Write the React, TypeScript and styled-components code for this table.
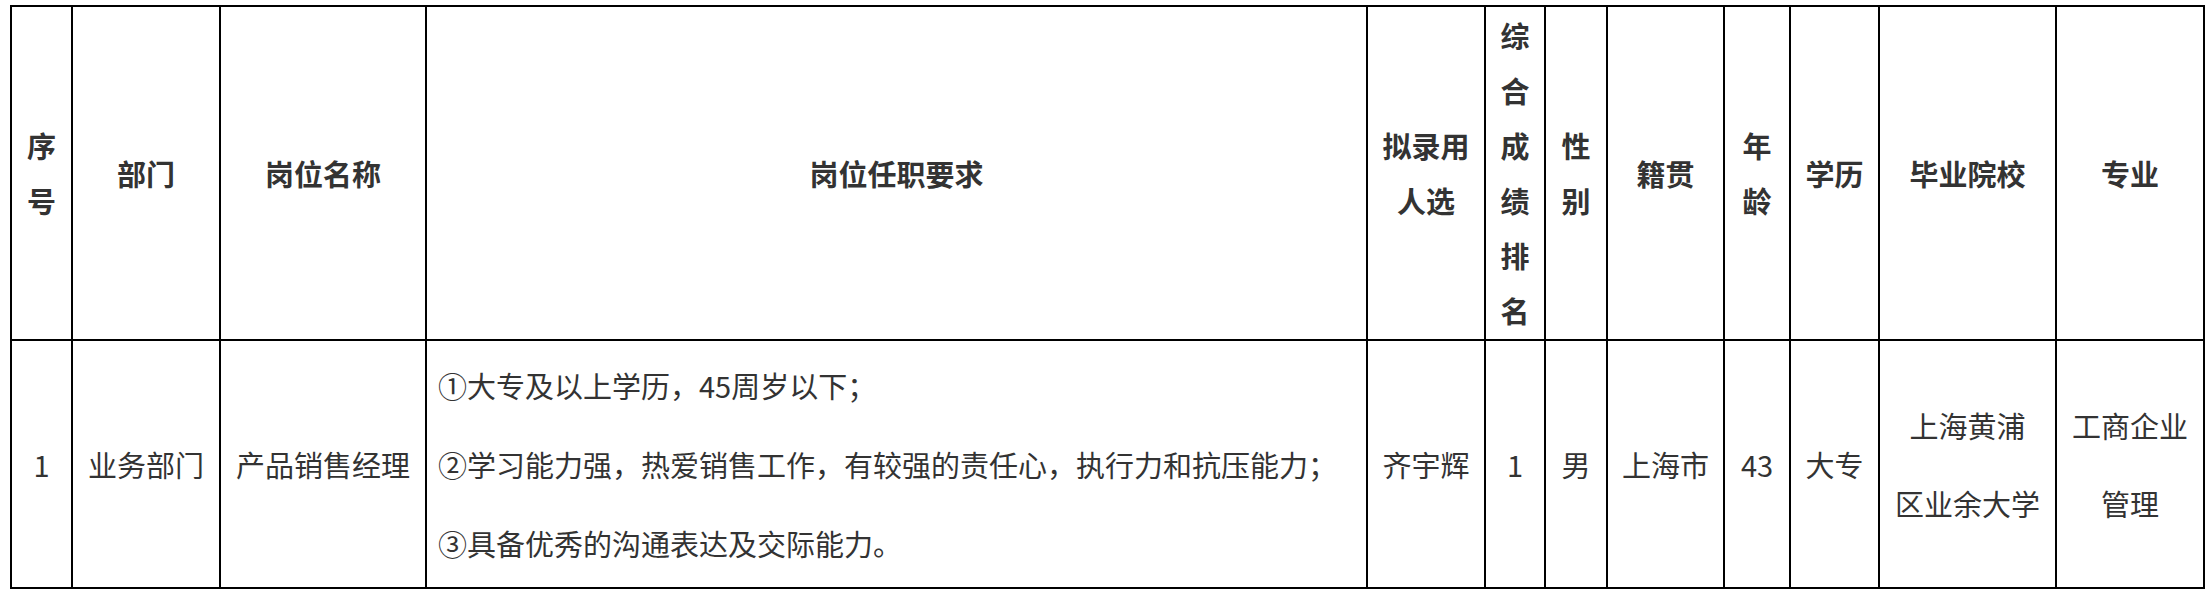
import styled, { createGlobalStyle } from "styled-components";

const GlobalStyle = createGlobalStyle`
  html,
  body {
    margin: 0;
    padding: 0;
    background: #fff;
  }
  body {
    font-family: "Noto Sans CJK SC", "Noto Sans", sans-serif;
    color: #333;
  }
`;

const Page = styled.div`
  padding: 5px 0 0 10px;
`;

// table drawn as a grid: the black background shows through the 2px gaps as rules
const Table = styled.div`
  display: grid;
  grid-template-columns: 59px 146px 204px 939px 116px 58px 60px 115px 64px 87px 175px 146px;
  grid-template-rows: 332px 246px;
  gap: 2px;
  padding: 2px;
  background: #000;
  width: max-content;
`;

const Cell = styled.div`
  background: #fff;
  display: flex;
  align-items: center;
  justify-content: center;
  text-align: center;
  padding: 0 12px;
  font-size: 29px;
  overflow: visible;
`;

const HeadCell = styled(Cell)`
  font-weight: 700;
  line-height: 55px;
`;

const BodyCell = styled(Cell)`
  font-weight: 400;
  line-height: 78px;
`;

const RequireCell = styled(BodyCell)`
  flex-direction: column;
  align-items: flex-start;
  justify-content: center;
  text-align: left;
  line-height: 79px;
  padding: 0 11px;
`;

const Line = styled.div`
  white-space: nowrap;
`;

const headers = [
  "序号",
  "部门",
  "岗位名称",
  "岗位任职要求",
  "拟录用人选",
  "综合成绩排名",
  "性别",
  "籍贯",
  "年龄",
  "学历",
  "毕业院校",
  "专业",
];

const requirements = [
  "①大专及以上学历，45周岁以下；",
  "②学习能力强，热爱销售工作，有较强的责任心，执行力和抗压能力；",
  "③具备优秀的沟通表达及交际能力。",
];

const App = () => {
  return (
    <>
      <GlobalStyle />
      <Page>
        <Table>
          {headers.map((h) => (
            <HeadCell key={h}>{h}</HeadCell>
          ))}

          <BodyCell>1</BodyCell>
          <BodyCell>业务部门</BodyCell>
          <BodyCell>产品销售经理</BodyCell>
          <RequireCell>
            {requirements.map((r) => (
              <Line key={r}>{r}</Line>
            ))}
          </RequireCell>
          <BodyCell>齐宇辉</BodyCell>
          <BodyCell>1</BodyCell>
          <BodyCell>男</BodyCell>
          <BodyCell>上海市</BodyCell>
          <BodyCell>43</BodyCell>
          <BodyCell>大专</BodyCell>
          <BodyCell>
            上海黄浦
            <br />
            区业余大学
          </BodyCell>
          <BodyCell>
            工商企业
            <br />
            管理
          </BodyCell>
        </Table>
      </Page>
    </>
  );
};

export default App;
